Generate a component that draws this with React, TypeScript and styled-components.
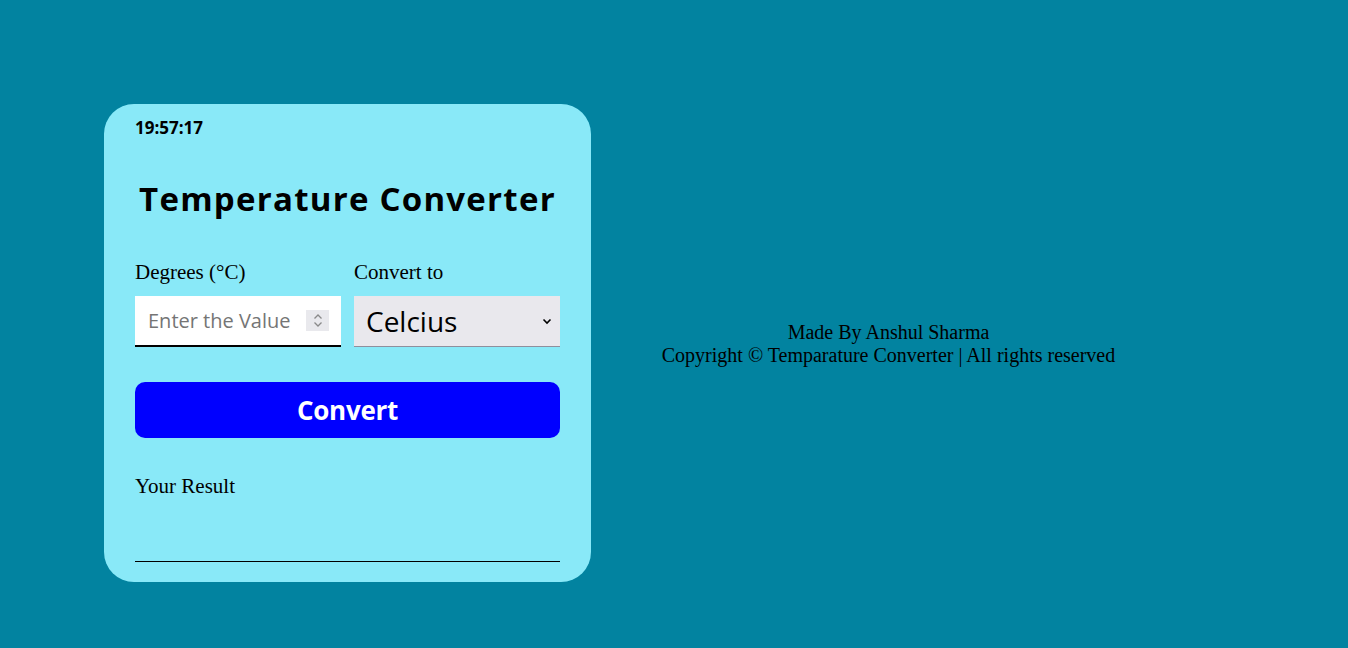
import React, { useState } from "react";
import styled, { createGlobalStyle } from "styled-components";

const Global = createGlobalStyle`
  html, body { margin: 0; padding: 0; }
  body { background: #0283a0; font-family: "Liberation Serif", "Times New Roman", serif; }
`;

const Page = styled.div`
  display: flex;
  padding: 104px 0 0 104px;
  box-sizing: border-box;
  min-height: 648px;
`;

const Card = styled.div`
  width: 487px;
  box-sizing: border-box;
  background: #89e9f8;
  border-radius: 30px;
  padding: 12px 31px 20px;
  display: flex;
  flex-direction: column;
  align-self: flex-start;
`;

const Clock = styled.div`
  font-family: "Open Sans", "Noto Sans", sans-serif;
  font-weight: 700;
  font-size: 17px;
  line-height: 24px;
  color: #000;
`;

const Title = styled.h1`
  margin: 35px 0 0;
  font-family: "Open Sans", "Noto Sans", sans-serif;
  font-weight: 700;
  font-size: 33px;
  line-height: 48px;
  letter-spacing: 1.25px;
  text-align: center;
  white-space: nowrap;
  color: #000;
`;

const Fields = styled.div`
  display: grid;
  grid-template-columns: minmax(0, 1fr) minmax(0, 1fr);
  column-gap: 13px;
  margin-top: 37px;
`;

const Field = styled.div`
  display: flex;
  flex-direction: column;
  gap: 12px;
  min-width: 0;
`;

const Label = styled.label`
  font-size: 21px;
  line-height: 24px;
  color: #000;
`;

const InputBox = styled.div`
  display: flex;
  align-items: center;
  height: 49px;
  background: #fff;
  border-bottom: 2px solid #000;
  padding: 0 12px 0 13px;
`;

const Input = styled.input`
  flex: 1;
  width: 0;
  min-width: 0;
  border: none;
  outline: none;
  background: transparent;
  padding: 0;
  font-family: "Open Sans", "Noto Sans", sans-serif;
  font-size: 20px;
  color: #000;
  &::placeholder { color: #757575; }
`;

const Spinner = styled.span`
  flex: none;
  width: 23px;
  height: 21px;
  background: #e9e9ed;
  display: flex;
  align-items: center;
  justify-content: center;
`;

const SelectBox = styled.div`
  display: flex;
  align-items: center;
  height: 50px;
  background: #e9e8ed;
  border-bottom: 1px solid #8f8f9d;
  padding: 0 8px 0 0;
`;

const Select = styled.select`
  flex: 1;
  width: 0;
  min-width: 0;
  appearance: none;
  border: none;
  outline: none;
  background: transparent;
  height: 100%;
  padding: 0 0 0 12px;
  font-family: "Open Sans", "Noto Sans", sans-serif;
  font-size: 28px;
  color: #000;
`;

const Button = styled.button`
  margin-top: 35px;
  height: 56px;
  border: none;
  border-radius: 10px;
  background: #0000ff;
  color: #fff;
  font-family: "Open Sans", "Noto Sans", sans-serif;
  font-weight: 700;
  font-size: 26px;
  letter-spacing: -0.3px;
  cursor: pointer;
`;

const ResultLabel = styled.div`
  margin-top: 36px;
  font-size: 21px;
  line-height: 24px;
  color: #000;
`;

const ResultOut = styled.div`
  height: 63px;
  border-bottom: 1px solid #000;
`;

const FooterArea = styled.div`
  width: 595px;
  text-align: center;
  font-size: 20px;
  line-height: 23px;
  color: #000;
  align-self: flex-start;
  margin-top: 217px;
`;

export default function App() {
  const [time] = useState("19:57:17");
  return (
    <>
      <Global />
      <Page>
        <Card>
          <Clock>{time}</Clock>
          <Title>Temperature Converter</Title>
          <Fields>
            <Field>
              <Label>Degrees (°C)</Label>
              <InputBox>
                <Input type="text" placeholder="Enter the Value" />
                <Spinner>
                  <svg width="12" height="17" viewBox="0 0 12 17">
                    <path d="M2.5 6.5 L6 3 L9.5 6.5" fill="none" stroke="#8a8a8a" strokeWidth="1.3" />
                    <path d="M2.5 10.5 L6 14 L9.5 10.5" fill="none" stroke="#8a8a8a" strokeWidth="1.3" />
                  </svg>
                </Spinner>
              </InputBox>
            </Field>
            <Field>
              <Label>Convert to</Label>
              <SelectBox>
                <Select defaultValue="c">
                  <option value="c">Celcius</option>
                  <option value="f">Fahrenheit</option>
                  <option value="k">Kelvin</option>
                </Select>
                <svg width="10" height="7" viewBox="0 0 10 7">
                  <path d="M1.5 1.5 L5 5 L8.5 1.5" fill="none" stroke="#000" strokeWidth="1.6" />
                </svg>
              </SelectBox>
            </Field>
          </Fields>
          <Button>Convert</Button>
          <ResultLabel>Your Result</ResultLabel>
          <ResultOut />
        </Card>
        <FooterArea>
          Made By Anshul Sharma
          <br />
          Copyright © Temparature Converter | All rights reserved
        </FooterArea>
      </Page>
    </>
  );
}
